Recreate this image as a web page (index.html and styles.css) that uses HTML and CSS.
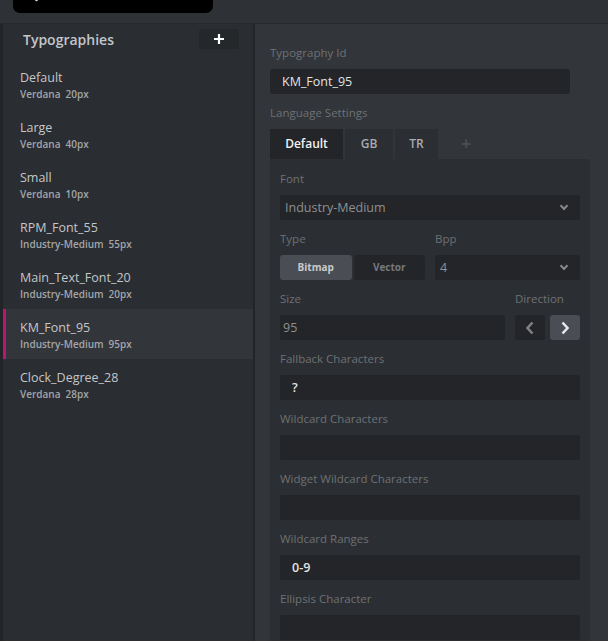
FILE: index.html
```html
<!DOCTYPE html>
<html lang="en">
<head>
  <meta charset="UTF-8">
  <meta name="viewport" content="width=device-width, initial-scale=1.0">
  <title>Typographies</title>
  <link rel="stylesheet" href="styles.css">
</head>
<body>

<div class="topbar">
  <div class="search">
    <span class="search-icon"></span>
  </div>
</div>

<div class="layout">
  <aside class="sidebar">
    <div class="sidebar-head">
      <span class="sidebar-title">Typographies</span>
      <button class="add-btn" type="button">
        <svg width="10" height="10" viewBox="0 0 10 10"><path d="M5 0v10M0 5h10" stroke="#fff" stroke-width="2.2"/></svg>
      </button>
    </div>

    <ul class="typo-list">
      <li class="typo-item"><div class="typo-name">Default</div><div class="typo-sub">Verdana<span class="sp"></span>20px</div></li>
      <li class="typo-item"><div class="typo-name">Large</div><div class="typo-sub">Verdana<span class="sp"></span>40px</div></li>
      <li class="typo-item"><div class="typo-name">Small</div><div class="typo-sub">Verdana<span class="sp"></span>10px</div></li>
      <li class="typo-item"><div class="typo-name">RPM_Font_55</div><div class="typo-sub">Industry-Medium<span class="sp"></span>55px</div></li>
      <li class="typo-item"><div class="typo-name">Main_Text_Font_20</div><div class="typo-sub">Industry-Medium<span class="sp"></span>20px</div></li>
      <li class="typo-item active"><div class="typo-name">KM_Font_95</div><div class="typo-sub">Industry-Medium<span class="sp"></span>95px</div></li>
      <li class="typo-item"><div class="typo-name">Clock_Degree_28</div><div class="typo-sub">Verdana<span class="sp"></span>28px</div></li>
    </ul>
  </aside>

  <main class="main">
    <label class="field-label">Typography Id</label>
    <div class="input input-main">KM_Font_95</div>

    <label class="field-label">Language Settings</label>
    <div class="tabs">
      <div class="tab active">Default</div>
      <div class="tab">GB</div>
      <div class="tab">TR</div>
      <div class="tab tab-add">+</div>
    </div>

    <div class="tab-panel">
      <label class="field-label">Font</label>
      <div class="input select muted">Industry-Medium <span class="chev"></span></div>

      <div class="row">
        <div class="col col-type">
          <label class="field-label">Type</label>
          <div class="toggle">
            <div class="toggle-opt on">Bitmap</div>
            <div class="toggle-opt">Vector</div>
          </div>
        </div>
        <div class="col col-bpp">
          <label class="field-label">Bpp</label>
          <div class="input select muted">4 <span class="chev"></span></div>
        </div>
      </div>

      <div class="row">
        <div class="col col-size">
          <label class="field-label">Size</label>
          <div class="input muted size-input">95</div>
        </div>
        <div class="col col-dir">
          <label class="field-label">Direction</label>
          <div class="dir-btns">
            <button class="dir-btn" type="button">
              <svg width="10" height="14" viewBox="0 0 10 14"><path d="M7.5 1.5L2.5 7l5 5.5" fill="none" stroke="#7e8185" stroke-width="2.6"/></svg>
            </button>
            <button class="dir-btn on" type="button">
              <svg width="10" height="14" viewBox="0 0 10 14"><path d="M2.5 1.5L7.5 7l-5 5.5" fill="none" stroke="#e6e7e8" stroke-width="2.6"/></svg>
            </button>
          </div>
        </div>
      </div>

      <label class="field-label">Fallback Characters</label>
      <div class="input strong">?</div>

      <label class="field-label">Wildcard Characters</label>
      <div class="input"></div>

      <label class="field-label">Widget Wildcard Characters</label>
      <div class="input"></div>

      <label class="field-label">Wildcard Ranges</label>
      <div class="input strong">0-9</div>

      <label class="field-label">Ellipsis Character</label>
      <div class="input"></div>
    </div>
  </main>
</div>

</body>
</html>
```

FILE: styles.css
```css
body {
  margin: 0;
  padding: 0;
  font-family: 'Open Sans', 'Noto Sans', sans-serif;
  background-color: #323539;
  height: 641px;
  overflow: hidden;
}

.topbar {
  height: 23px;
  background-color: #2e3135;
  border-bottom: 1px solid #27292c;
  position: relative;
}

.search {
  position: absolute;
  left: 13px;
  top: 0;
  width: 200px;
  height: 13px;
  background-color: #000;
  border-radius: 0 0 7px 7px;
  overflow: hidden;
}

.search-icon {
  position: absolute;
  left: 22px;
  top: -2px;
  width: 3px;
  height: 3px;
  background-color: #ddd;
  border-radius: 1px;
  transform: rotate(45deg);
}

.layout {
  display: flex;
  height: 617px;
  overflow: hidden;
}

.sidebar {
  width: 250px;
  background-color: #2a2d31;
  border-left: 3px solid #222427;
  border-right: 2px solid #222427;
}

.sidebar-head {
  display: flex;
  align-items: flex-start;
  justify-content: space-between;
  padding: 5px 14px 9px 20px;
}

.sidebar-title {
  font-size: 14px;
  font-weight: 600;
  color: #c3c6c9;
  line-height: 20px;
  margin-top: 1px;
}

.add-btn {
  width: 40px;
  height: 20px;
  border: none;
  border-radius: 3px;
  background-color: #25282b;
  display: flex;
  align-items: center;
  justify-content: center;
  padding: 0;
}

.typo-list {
  list-style: none;
  margin: 0;
  padding: 0;
}

.typo-item {
  height: 50px;
  box-sizing: border-box;
  padding: 11px 0 0 17px;
}

.typo-item.active {
  background-color: #32353a;
  box-shadow: inset 3px 0 0 #b8166f;
}

.typo-name {
  font-size: 12.5px;
  line-height: 16px;
  color: #c4c6c9;
}

.typo-sub {
  font-size: 10px;
  line-height: 12px;
  margin-top: 2px;
  font-weight: 600;
  color: #a3a6aa;
}

.sp {
  display: inline-block;
  width: 5px;
}

.main {
  flex: 1;
  padding: 20px 0 0 15px;
}

.field-label {
  display: block;
  font-size: 11.5px;
  line-height: 17px;
  margin-bottom: 8px;
  color: #6e7175;
}

.input {
  height: 25px;
  box-sizing: border-box;
  background-color: #232528;
  border-radius: 3px;
  margin-bottom: 10px;
  padding: 0 12px;
  font-size: 12.5px;
  line-height: 25px;
  color: #e2e3e4;
}

.input-main {
  width: 300px;
}

.input.muted {
  color: #8d9094;
  padding-left: 5px;
}

.input.strong {
  font-weight: 600;
}

.size-input {
  padding-left: 3px !important;
}

.select {
  display: flex;
  justify-content: space-between;
  align-items: center;
}

.chev {
  width: 4px;
  height: 4px;
  border-right: 2px solid #85888c;
  border-bottom: 2px solid #85888c;
  transform: rotate(45deg);
  margin: -4px 1px 0 0;
}

.tabs {
  display: flex;
  height: 30px;
  gap: 2px;
}

.tab {
  font-size: 12px;
  font-weight: 600;
  line-height: 30px;
  text-align: center;
  color: #a9acb0;
  background-color: #2b2e32;
}

.tab:nth-child(1) { width: 73px; }
.tab:nth-child(2) { width: 48px; }
.tab:nth-child(3) { width: 43px; }

.tab.active {
  background-color: #232528;
  color: #f2f2f2;
}

.tab.tab-add {
  background: none;
  width: 52px;
  font-size: 17px;
  font-weight: 700;
  color: #4a4d51;
}

.tab-panel {
  width: 320px;
  box-sizing: border-box;
  height: 482px;
  overflow: hidden;
  background-color: #2b2e32;
  padding: 11px 10px 0 10px;
}

.row {
  display: flex;
  justify-content: space-between;
}

.col-type { width: 145px; }
.col-bpp { width: 145px; }
.col-size { width: 225px; }
.col-dir { width: 65px; }

.toggle {
  display: flex;
  gap: 2px;
  height: 25px;
  margin-bottom: 10px;
}

.toggle-opt {
  flex: 1;
  background-color: #232528;
  border-radius: 3px;
  font-size: 10px;
  font-weight: 700;
  line-height: 25px;
  text-align: center;
  color: #75787c;
}

.toggle-opt.on {
  background-color: #4a4d53;
  color: #c9cacc;
}

.dir-btns {
  display: flex;
  justify-content: space-between;
  margin-bottom: 10px;
}

.dir-btn {
  width: 30px;
  height: 25px;
  border: none;
  border-radius: 3px;
  background-color: #232528;
  padding: 0;
  display: flex;
  align-items: center;
  justify-content: center;
}

.dir-btn.on {
  background-color: #4a4d53;
}

.col-dir .field-label {
  white-space: nowrap;
}
```
